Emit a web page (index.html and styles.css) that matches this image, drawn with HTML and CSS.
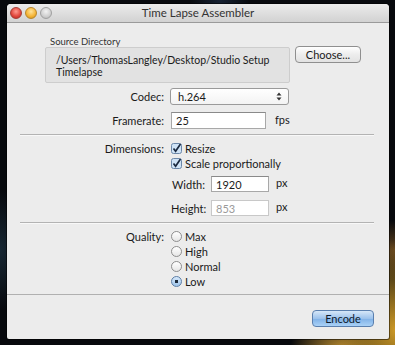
FILE: index.html
```html
<!DOCTYPE html>
<html>
<head>
<meta charset="utf-8">
<link rel="stylesheet" href="styles.css">
</head>
<body>
<div class="desktop">
  <div class="window">
    <div class="titlebar">
      <div class="lights">
        <span class="light red"></span>
        <span class="light yellow"></span>
        <span class="light gray"></span>
      </div>
      <div class="title">Time Lapse Assembler</div>
    </div>
    <div class="content">
      <div class="source-row">
        <div class="source-col">
          <div class="source-label">Source Directory</div>
          <div class="source-box">/Users/ThomasLangley/Desktop/Studio Setup<br>Timelapse</div>
        </div>
        <div class="btn choose">Choose...</div>
      </div>

      <div class="row codec-row">
        <div class="label">Codec:</div>
        <div class="select"><span>h.264</span>
          <svg class="arrows" width="6" height="9" viewBox="0 0 6 9"><path d="M3 0.5 L5.5 3.5 H0.5 Z M3 8.5 L5.5 5.5 H0.5 Z" fill="#333"/></svg>
        </div>
      </div>

      <div class="row fr-row">
        <div class="label">Framerate:</div>
        <div class="field fr-field">25</div>
        <div class="unit">fps</div>
      </div>

      <div class="sep"></div>

      <div class="row dims">
        <div class="label">Dimensions:</div>
        <div class="stack">
          <div class="check-line">
            <svg class="check" width="11" height="11" viewBox="0 0 11 11"><rect x="0.5" y="0.5" width="10" height="10" rx="2" fill="#cfe3f6" stroke="#6b87a8"/><path d="M2.5 5.5 L4.6 8.3 L9.5 1" fill="none" stroke="#1b2a40" stroke-width="1.7"/></svg>
            <span>Resize</span>
          </div>
          <div class="check-line">
            <svg class="check" width="11" height="11" viewBox="0 0 11 11"><rect x="0.5" y="0.5" width="10" height="10" rx="2" fill="#cfe3f6" stroke="#6b87a8"/><path d="M2.5 5.5 L4.6 8.3 L9.5 1" fill="none" stroke="#1b2a40" stroke-width="1.7"/></svg>
            <span>Scale proportionally</span>
          </div>
          <div class="sub-row wrow">
            <div class="sub-label">Width:</div>
            <div class="field dim-field">1920</div>
            <div class="unit">px</div>
          </div>
          <div class="sub-row hrow">
            <div class="sub-label">Height:</div>
            <div class="field dim-field disabled">853</div>
            <div class="unit">px</div>
          </div>
        </div>
      </div>

      <div class="sep sep2"></div>

      <div class="row quality">
        <div class="label">Quality:</div>
        <div class="stack">
          <div class="radio-line"><span class="radio"></span><span>Max</span></div>
          <div class="radio-line"><span class="radio"></span><span>High</span></div>
          <div class="radio-line"><span class="radio"></span><span>Normal</span></div>
          <div class="radio-line"><span class="radio on"></span><span>Low</span></div>
        </div>
      </div>
    </div>
    <div class="footer">
      <div class="btn encode">Encode</div>
    </div>
  </div>
</div>
</body>
</html>
```
FILE: styles.css
```css
html, body {
  margin: 0;
  padding: 0;
}
body {
  width: 395px;
  height: 345px;
  overflow: hidden;
  font-family: "Lato", "DejaVu Sans", sans-serif;
  font-size: 11px;
  color: #1a1a1a;
}
.desktop {
  width: 395px;
  height: 345px;
  padding: 4px 0 0 7px;
  box-sizing: border-box;
  background:
    radial-gradient(ellipse 60px 90px at 395px 330px, rgba(214,160,40,0.95), rgba(214,160,40,0) 100%),
    radial-gradient(ellipse 50px 40px at 340px 350px, rgba(200,150,50,0.9), rgba(200,150,50,0) 100%),
    radial-gradient(ellipse 40px 30px at 395px 250px, rgba(150,100,40,0.6), rgba(150,100,40,0) 100%),
    radial-gradient(ellipse 30px 60px at 0px 250px, rgba(40,70,90,0.5), rgba(40,70,90,0) 100%),
    radial-gradient(ellipse 30px 30px at 220px 0px, rgba(40,60,90,0.5), rgba(40,60,90,0) 100%),
    #07090d;
}
.window {
  width: 382px;
  height: 335px;
  background: #ececec;
  border-radius: 4px 4px 2px 2px;
  display: flex;
  flex-direction: column;
  overflow: hidden;
  box-shadow: 0 0 0 1px rgba(0,0,0,0.5);
}
.titlebar {
  height: 18px;
  flex: none;
  position: relative;
  background: linear-gradient(#ebebeb, #d2d2d2);
  border-bottom: 1px solid #9a9a9a;
  display: flex;
  align-items: center;
}
.lights {
  display: flex;
  gap: 3px;
  margin-left: 3px;
}
.light {
  width: 12px;
  height: 12px;
  border-radius: 50%;
  box-sizing: border-box;
}
.red { background: radial-gradient(circle at 50% 35%, #ff9a8f, #e0443a 60%, #b02a22); border: 1px solid #a53c35; }
.yellow { background: radial-gradient(circle at 50% 35%, #ffe39a, #f4b334 60%, #c48a1c); border: 1px solid #b8862a; }
.gray { background: radial-gradient(circle at 50% 35%, #f2f2f2, #cfcfcf 60%, #b0b0b0); border: 1px solid #a0a0a0; }
.title {
  position: absolute;
  left: 0;
  right: 0;
  top: 0;
  line-height: 18px;
  text-align: center;
  font-size: 11.5px;
  color: #333;
}
.content {
  flex: none;
  height: 271px;
}
.source-row {
  display: flex;
  margin-top: 13px;
  margin-left: 38px;
}
.source-label {
  font-size: 9.5px;
  line-height: 11px;
  color: #333;
  margin-left: 5px;
}
.source-box {
  width: 245px;
  height: 36px;
  box-sizing: border-box;
  background: #e2e2e2;
  border: 1px solid #cdcdcd;
  border-radius: 2px;
  padding: 6px 10px;
  font-size: 10.5px;
  line-height: 12px;
  color: #1a1a1a;
}
.btn {
  box-sizing: border-box;
  height: 17px;
  border-radius: 4px;
  text-align: center;
  line-height: 15px;
  font-size: 11px;
}
.choose {
  margin-left: 5px;
  margin-top: 10px;
  width: 66px;
  background: linear-gradient(#ffffff, #ededed 50%, #e2e2e2);
  border: 1px solid #8f8f8f;
}
.row {
  display: flex;
  align-items: flex-start;
}
.label {
  width: 157px;
  text-align: right;
  flex: none;
  line-height: 17px;
}
.codec-row {
  margin-top: 5px;
}
.select {
  margin-left: 6px;
  width: 119px;
  height: 17px;
  box-sizing: border-box;
  border: 1px solid #9a9a9a;
  border-radius: 3px;
  background: linear-gradient(#ffffff, #f3f3f3);
  display: flex;
  align-items: center;
  justify-content: space-between;
  padding: 0 6px 0 7px;
  line-height: 15px;
}
.arrows { display: block; }
.fr-row {
  margin-top: 7px;
}
.field {
  box-sizing: border-box;
  height: 17px;
  background: #fff;
  border: 1px solid #a8a8a8;
  border-top-color: #8a8a8a;
  padding: 0 4px;
  line-height: 16px;
}
.fr-field {
  margin-left: 7px;
  width: 95px;
}
.unit {
  margin-left: 9px;
  line-height: 15px;
}
.sep {
  height: 1px;
  background: #b3b3b3;
  margin: 5px 15px 0 13px;
  box-shadow: 0 1px 0 #f8f8f8;
}
.dims {
  margin-top: 6px;
}
.dims .label, .quality .label {
  line-height: 15px;
}
.stack {
  margin-left: 7px;
  display: flex;
  flex-direction: column;
}
.check-line, .radio-line {
  display: flex;
  align-items: center;
  height: 15px;
  gap: 3px;
}
.check { display: block; }
.sub-row {
  display: flex;
  align-items: center;
}
.wrow { margin-top: 5px; }
.hrow { margin-top: 8px; }
.sub-label {
  width: 34px;
  text-align: right;
}
.dim-field {
  margin-left: 6px;
  width: 58px;
  height: 16px;
  line-height: 15px;
}
.dim-field.disabled {
  color: #9a9a9a;
  border-color: #c8c8c8;
}
.hrow .unit, .wrow .unit { margin-left: 7px; margin-top: -4px; }
.sep2 { margin-top: 6px; }
.quality {
  margin-top: 6px;
}
.radio {
  width: 11px;
  height: 11px;
  box-sizing: border-box;
  border-radius: 50%;
  border: 1px solid #8e8e8e;
  background: linear-gradient(#ffffff, #e6e6e6);
  position: relative;
}
.radio.on {
  background: radial-gradient(circle, #1c2a3c 0 1.6px, transparent 2px), linear-gradient(#d6e8fa, #9ec4ea);
  border-color: #5c7ea6;
}
.footer {
  flex: 1;
  border-top: 1px solid #b0b0b0;
  display: flex;
  justify-content: flex-end;
  align-items: flex-start;
}
.encode {
  margin-top: 15px;
  margin-right: 15px;
  width: 62px;
  height: 17px;
  border: 1px solid #5a7fae;
  background: linear-gradient(#d6e7f8, #9cc2ec 50%, #7fb0e6 51%, #a9d1f7);
  color: #0d1a2c;
}
```
